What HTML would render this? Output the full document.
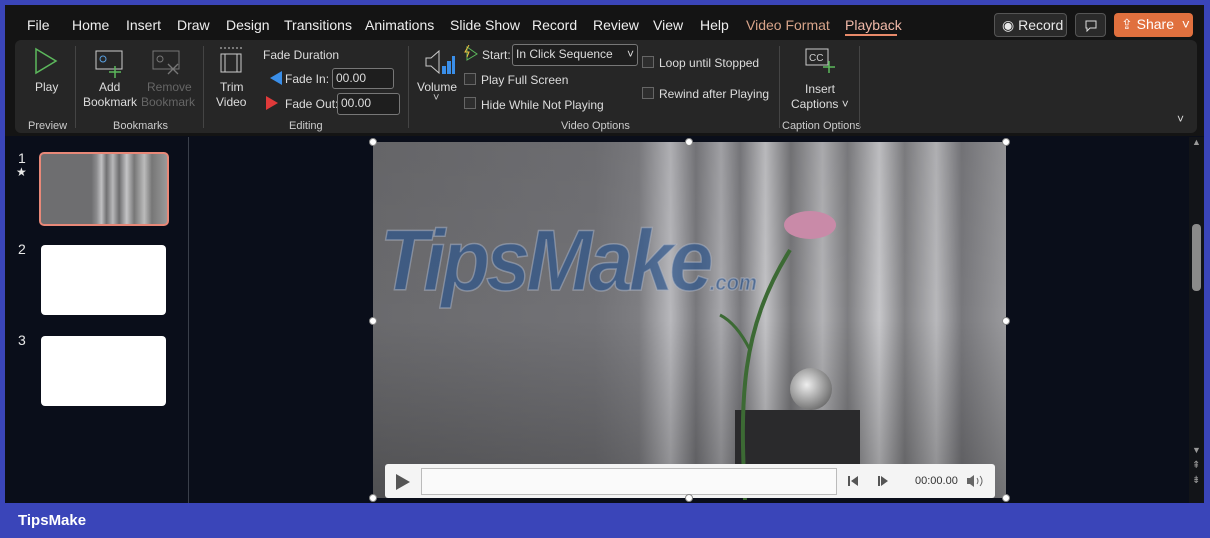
<!DOCTYPE html><html><head><meta charset="utf-8"><style>
*{margin:0;padding:0;box-sizing:border-box}
body{width:1210px;height:538px;background:#3a45b9;position:relative;overflow:hidden;font-family:"Liberation Sans",sans-serif;color:#e8e8e8}
.a{position:absolute}
#win{left:5px;top:5px;width:1199px;height:498px;background:#0a0e1a}
#top{left:5px;top:5px;width:1199px;height:131px;background:#141414}
.tab{position:absolute;top:17px;font-size:14px;color:#eee}
#rib{left:15px;top:40px;width:1182px;height:93px;background:#262626;border-radius:6px}
.s{font-size:12px;color:#ddd}
.g{font-size:11px;color:#ccc}
.sep{position:absolute;top:46px;width:1px;height:82px;background:#444}
.cb{position:absolute;width:12px;height:12px;border:1px solid #666;background:#2e2e2e}
.box{position:absolute;border:1px solid #777;border-radius:3px;background:#1e1e1e;font-size:12px;color:#ddd;padding:2px 3px}
.h{position:absolute;width:8px;height:8px;border-radius:50%;background:#fff;border:1px solid #888}
</style></head><body>
<div id="win" class="a"></div>
<div id="top" class="a"></div>
<span class="tab" style="left:27px">File</span>
<span class="tab" style="left:72px">Home</span>
<span class="tab" style="left:126px">Insert</span>
<span class="tab" style="left:177px">Draw</span>
<span class="tab" style="left:226px">Design</span>
<span class="tab" style="left:284px">Transitions</span>
<span class="tab" style="left:365px">Animations</span>
<span class="tab" style="left:450px">Slide Show</span>
<span class="tab" style="left:532px">Record</span>
<span class="tab" style="left:593px">Review</span>
<span class="tab" style="left:653px">View</span>
<span class="tab" style="left:700px">Help</span>
<span class="tab" style="left:746px;color:#d8a48a">Video Format</span>
<span class="tab" style="left:845px;color:#f0b8a8">Playback</span>
<div class="a" style="left:845px;top:34px;width:52px;height:2px;background:#e88a6a"></div>
<div class="a" style="left:994px;top:13px;width:73px;height:24px;border:1px solid #555;border-radius:4px;background:#2a2a2a;font-size:14px;padding:3px 0 0 7px">◉ Record</div>
<div class="a" style="left:1075px;top:13px;width:31px;height:24px;border:1px solid #555;border-radius:4px;background:#2a2a2a"><svg style="position:absolute;left:9px;top:6px" width="12" height="12"><path d="M1 1h10v7H5l-3 3V8H1z" fill="none" stroke="#ddd"/></svg></div>
<div class="a" style="left:1114px;top:13px;width:79px;height:24px;border-radius:4px;background:#e0703e;font-size:14px;padding:3px 0 0 7px;color:#fff">⇪ Share &nbsp;˅</div>
<div id="rib" class="a"></div>
<svg class="a" style="left:34px;top:47px" width="24" height="28"><path d="M2 2 L22 14 L2 26 Z" fill="none" stroke="#5cb85c" stroke-width="1.5"/></svg>
<span class="a s" style="left:35px;top:80px">Play</span>
<span class="a g" style="left:28px;top:120px">Preview</span>
<div class="sep" style="left:75px"></div>
<svg class="a" style="left:95px;top:50px" width="32" height="28"><rect x="1" y="1" width="26" height="18" fill="none" stroke="#ccc"/><circle cx="8" cy="9" r="3" fill="none" stroke="#5aa0e0"/><path d="M20 16v12M14 22h12" stroke="#5cb85c" stroke-width="1.5"/></svg>
<svg class="a" style="left:152px;top:50px" width="32" height="28"><rect x="1" y="1" width="26" height="18" fill="none" stroke="#777"/><circle cx="8" cy="9" r="3" fill="none" stroke="#777"/><path d="M16 14l10 10M26 14l-10 10" stroke="#777" stroke-width="1.3"/></svg>
<span class="a s" style="left:99px;top:80px">Add</span>
<span class="a s" style="left:83px;top:95px">Bookmark</span>
<span class="a s" style="left:147px;top:80px;color:#666">Remove</span>
<span class="a s" style="left:141px;top:95px;color:#666">Bookmark</span>
<span class="a g" style="left:113px;top:120px">Bookmarks</span>
<div class="sep" style="left:203px"></div>
<svg class="a" style="left:219px;top:46px" width="24" height="30"><path d="M1 2h22" stroke="#ccc" stroke-dasharray="2 2"/><rect x="2" y="8" width="20" height="18" fill="none" stroke="#ccc"/><path d="M6 8v18M18 8v18" stroke="#ccc"/></svg>
<span class="a s" style="left:220px;top:80px">Trim</span>
<span class="a s" style="left:216px;top:95px">Video</span>
<span class="a s" style="left:263px;top:48px">Fade Duration</span>
<svg class="a" style="left:270px;top:71px" width="12" height="14"><path d="M12 0L0 7L12 14Z" fill="#3a8ee8"/></svg>
<span class="a s" style="left:285px;top:72px">Fade In:</span>
<div class="box" style="left:332px;top:68px;width:62px;height:21px">00.00</div>
<svg class="a" style="left:266px;top:96px" width="12" height="14"><path d="M0 0L12 7L0 14Z" fill="#e03a3a"/></svg>
<span class="a s" style="left:285px;top:97px">Fade Out:</span>
<div class="box" style="left:337px;top:93px;width:63px;height:22px">00.00</div>
<span class="a g" style="left:289px;top:120px">Editing</span>
<div class="sep" style="left:408px"></div>
<svg class="a" style="left:424px;top:48px" width="32" height="30"><path d="M2 10h5l8-7v22l-8-7H2z" fill="none" stroke="#ccc"/><path d="M18 26h4v-8h-4zM23 26h4v-13h-4zM28 26h3v-18h-3z" fill="#3a8ee8"/></svg>
<span class="a s" style="left:417px;top:80px">Volume</span>
<span class="a g" style="left:433px;top:92px">˅</span>
<svg class="a" style="left:463px;top:45px" width="16" height="16"><path d="M4 2l10 7-10 6z" fill="none" stroke="#5cb85c"/><path d="M6 0l-4 7h4l-2 5" stroke="#f0c040" fill="none"/></svg>
<span class="a s" style="left:482px;top:48px">Start:</span>
<div class="box" style="left:512px;top:44px;width:126px;height:22px">In Click Sequence <span style="float:right">˅</span></div>
<div class="cb" style="left:464px;top:73px"></div><span class="a s" style="left:481px;top:73px">Play Full Screen</span>
<div class="cb" style="left:464px;top:97px"></div><span class="a s" style="left:481px;top:98px">Hide While Not Playing</span>
<div class="cb" style="left:642px;top:56px"></div><span class="a s" style="left:659px;top:56px">Loop until Stopped</span>
<div class="cb" style="left:642px;top:87px"></div><span class="a s" style="left:659px;top:87px">Rewind after Playing</span>
<span class="a g" style="left:561px;top:120px">Video Options</span>
<div class="sep" style="left:779px"></div>
<svg class="a" style="left:805px;top:47px" width="30" height="28"><rect x="1" y="2" width="22" height="16" fill="none" stroke="#ccc"/><text x="4" y="14" font-size="10" fill="#ccc" font-family="Liberation Sans">CC</text><path d="M24 14v12M18 20h12" stroke="#5cb85c" stroke-width="1.5"/></svg>
<span class="a s" style="left:805px;top:82px">Insert</span>
<span class="a s" style="left:791px;top:97px">Captions ˅</span>
<span class="a g" style="left:782px;top:120px">Caption Options</span>
<div class="sep" style="left:859px"></div>
<span class="a s" style="left:1177px;top:112px">˅</span>
<div class="a" style="left:188px;top:137px;width:1px;height:366px;background:#3a3f4a"></div>
<span class="a" style="left:18px;top:150px;font-size:14px">1</span>
<span class="a" style="left:16px;top:165px;font-size:12px">★</span>
<div class="a" style="left:39px;top:152px;width:130px;height:74px;border:2px solid #e88878;border-radius:5px;background:linear-gradient(90deg,#6e6e70 0 40%,#8a8a8c 44%,#c0c0c2 48%,#707072 52%,#b8b8ba 57%,#6c6c6e 62%,#c4c4c6 68%,#777 74%,#bbb 82%,#777 88%,#999)"></div>
<span class="a" style="left:18px;top:241px;font-size:14px">2</span>
<div class="a" style="left:41px;top:245px;width:125px;height:70px;background:#fff;border-radius:4px"></div>
<span class="a" style="left:18px;top:332px;font-size:14px">3</span>
<div class="a" style="left:41px;top:336px;width:125px;height:70px;background:#fff;border-radius:4px"></div>
<div class="a" style="left:373px;top:142px;width:633px;height:356px;background:linear-gradient(90deg,#6a6a6d 0,#727276 35%,#7e7e82 42%,#b8b8bc 47%,#78787c 51%,#a8a8ac 55%,#7a7a7e 58%,#c2c2c5 62%,#767679 66%,#b2b2b5 71%,#7e7e81 75%,#c6c6c9 80%,#808083 84%,#b8b8bb 89%,#78787c 93%,#9a9a9d 100%)"></div>
<div class="a" style="left:373px;top:142px;width:633px;height:356px;background:linear-gradient(180deg,rgba(0,0,0,0.05),rgba(0,0,0,0) 50%,rgba(0,0,0,0.25))"></div>
<div class="a" style="left:735px;top:410px;width:125px;height:88px;background:#2a2a2c"></div>
<div class="a" style="left:790px;top:368px;width:42px;height:42px;border-radius:50%;background:radial-gradient(circle at 40% 40%,#eee,#888 60%,#444)"></div>
<svg class="a" style="left:710px;top:200px" width="140" height="300"><path d="M35 300 C30 200,30 130,80 50" stroke="#3c6a34" stroke-width="4" fill="none"/><path d="M40 150 C30 130,20 120,10 115" stroke="#3c6a34" stroke-width="3" fill="none"/><ellipse cx="100" cy="25" rx="26" ry="14" fill="#c98aa8"/></svg>
<div class="a" style="left:380px;top:212px;font-size:86px;font-weight:bold;font-style:italic;color:rgba(45,85,140,0.7);letter-spacing:-4px;-webkit-text-stroke:1.5px rgba(180,185,200,0.5);transform:scaleX(0.92);transform-origin:left">TipsMake<span style="font-size:22px;letter-spacing:0">.com</span></div>
<div class="a" style="left:385px;top:464px;width:610px;height:34px;background:#f4f4f4;border-radius:3px"></div>
<svg class="a" style="left:395px;top:472px" width="16" height="20"><path d="M1 2L15 10L1 18Z" fill="#555"/></svg>
<div class="a" style="left:421px;top:468px;width:416px;height:27px;border:1px solid #bbb;background:#fafafa"></div>
<svg class="a" style="left:848px;top:475px" width="12" height="12"><path d="M0 1h2v10H0zM10 1L3 6l7 5z" fill="#555"/></svg>
<svg class="a" style="left:878px;top:475px" width="12" height="12"><path d="M0 1h2v10H0zM3 1l7 5-7 5z" fill="#555"/></svg>
<span class="a" style="left:915px;top:475px;font-size:11px;color:#333">00:00.00</span>
<svg class="a" style="left:966px;top:474px" width="18" height="14"><path d="M1 4h3l4-3v12l-4-3H1z" fill="#666"/><path d="M11 4q2 3 0 6M14 2q4 5 0 10" stroke="#666" fill="none"/></svg>
<div class="h" style="left:369px;top:138px"></div><div class="h" style="left:685px;top:138px"></div><div class="h" style="left:1002px;top:138px"></div>
<div class="h" style="left:369px;top:317px"></div><div class="h" style="left:1002px;top:317px"></div>
<div class="h" style="left:369px;top:494px"></div><div class="h" style="left:685px;top:494px"></div><div class="h" style="left:1002px;top:494px"></div>
<div class="a" style="left:1189px;top:137px;width:15px;height:366px;background:#121418"></div>
<div class="a" style="left:1192px;top:224px;width:9px;height:67px;background:#8a8a8a;border-radius:4px"></div>
<span class="a" style="left:1192px;top:137px;font-size:9px;color:#999">▲</span>
<span class="a" style="left:1192px;top:445px;font-size:9px;color:#999">▼</span>
<span class="a" style="left:1192px;top:460px;font-size:10px;color:#999">⇞</span>
<span class="a" style="left:1192px;top:475px;font-size:10px;color:#999">⇟</span>
<span class="a" style="left:18px;top:512px;font-size:15px;font-weight:bold;color:#fff">TipsMake</span>
</body></html>
